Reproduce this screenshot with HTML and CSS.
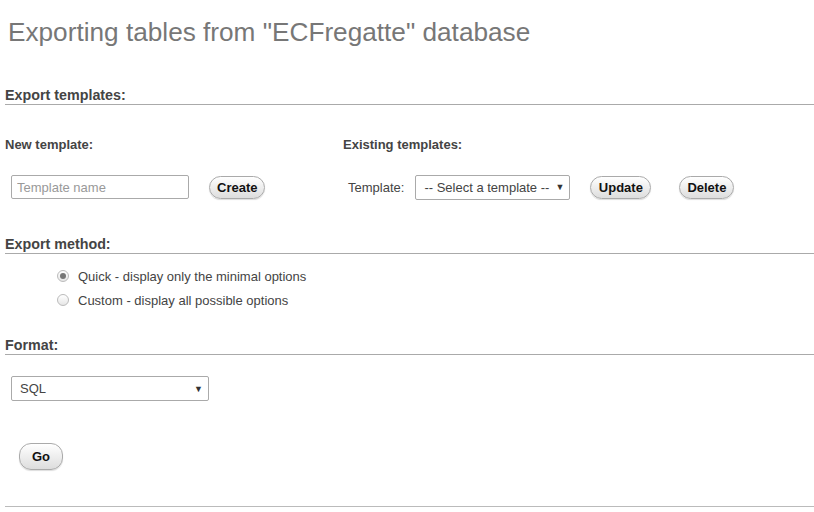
FILE: index.html
```html
<!DOCTYPE html>
<html>
<head>
<meta charset="utf-8">
<link rel="stylesheet" href="styles.css">
</head>
<body>
<div class="page">
  <h2 class="title">Exporting tables from "ECFregatte" database</h2>

  <section class="section templates">
    <h3 class="heading">Export templates:</h3>
    <div class="tpl-row">
      <div class="tpl-col tpl-new">
        <h4 class="subhead">New template:</h4>
        <div class="controls">
          <input class="text-input" type="text" placeholder="Template name">
          <button class="btn btn-create">Create</button>
        </div>
      </div>
      <div class="tpl-col tpl-existing">
        <h4 class="subhead">Existing templates:</h4>
        <div class="controls">
          <span class="label">Template:</span>
          <div class="select select-tpl"><span>-- Select a template --</span><span class="arrow">▼</span></div>
          <button class="btn btn-update">Update</button>
          <button class="btn btn-delete">Delete</button>
        </div>
      </div>
    </div>
  </section>

  <section class="section method">
    <h3 class="heading">Export method:</h3>
    <ul class="radios">
      <li class="radio-item"><span class="radio checked"></span><span>Quick - display only the minimal options</span></li>
      <li class="radio-item"><span class="radio"></span><span>Custom - display all possible options</span></li>
    </ul>
  </section>

  <section class="section format">
    <h3 class="heading">Format:</h3>
    <div class="select select-format"><span>SQL</span><span class="arrow">▼</span></div>
  </section>

  <div class="go-wrap">
    <button class="btn btn-go">Go</button>
  </div>
  <div class="bottom-rule"></div>
</div>
</body>
</html>
```

FILE: styles.css
```css
* { box-sizing: border-box; }
html, body { margin: 0; padding: 0; background: #fff; }
body {
  font-family: "Liberation Sans", Arial, sans-serif;
  font-size: 13px;
  color: #444;
}
.page { padding: 0 0 0 5px; }
.title {
  margin: 0;
  padding: 15px 0 0 3px;
  height: 80px;
  font-size: 26.2px;
  font-weight: normal;
  color: #777;
  line-height: 34px;
}
.heading {
  margin: 0;
  font-size: 14.3px;
  font-weight: bold;
  color: #444;
  line-height: 17px;
  padding-top: 7px;
  border-bottom: 1px solid #aaa;
}
.tpl-row { display: flex; }
.tpl-col { display: flex; flex-direction: column; }
.tpl-new { width: 338px; }
.subhead {
  margin: 0;
  font-size: 13px;
  font-weight: bold;
  color: #444;
  line-height: 16px;
  padding-top: 32px;
}
.controls {
  display: flex;
  align-items: center;
  margin-top: 21px;
  height: 26px;
}
.tpl-new .controls { padding-left: 6px; }
.text-input {
  width: 178px;
  height: 24px;
  border: 1px solid #aaa;
  border-radius: 2px;
  padding: 0 5px;
  font-family: "Liberation Sans", Arial, sans-serif;
  font-size: 13px;
  color: #444;
  background: #fff;
}
.text-input::placeholder { color: #999; }
.btn {
  font-family: "Liberation Sans", Arial, sans-serif;
  font-weight: bold;
  font-size: 13px;
  color: #111;
  height: 23px;
  padding: 0 7px;
  border: 1px solid #aaa;
  border-radius: 12px;
  background: linear-gradient(#fff, #ddd);
  box-shadow: 0 1px 1px #ddd;
}
.btn-create { margin-left: 20px; width: 56px; }
.label { color: #444; margin-left: 5px; font-size: 13px; }
.select {
  display: flex;
  align-items: center;
  justify-content: space-between;
  height: 25px;
  border: 1px solid #aaa;
  border-radius: 2px;
  background: #fff;
  color: #444;
  font-size: 13px;
  padding: 0 5px 0 8px;
}
.arrow { font-size: 9px; color: #333; }
.select-tpl { width: 155px; margin-left: 11px; }
.btn-update { margin-left: 20px; width: 61px; }
.btn-delete { margin-left: 28px; width: 55px; }
.templates { padding-bottom: 30px; }
.method .heading { padding-top: 6px; }
.radios { list-style: none; margin: 0; padding: 10px 0 0 52px; }
.radio-item { display: flex; align-items: center; height: 24px; color: #444; }
.radio {
  width: 12px; height: 12px;
  border: 1px solid #bbb;
  border-radius: 50%;
  background: linear-gradient(#fff, #e6e6e6);
  margin-right: 9px;
  position: relative;
}
.radio.checked::after {
  content: "";
  position: absolute;
  left: 2px; top: 2px;
  width: 6px; height: 6px;
  border-radius: 50%;
  background: #777;
}
.format { padding-top: 18px; }
.select-format { width: 198px; margin: 21px 0 0 6px; }
.go-wrap { padding: 42px 0 0 14px; height: 105px; }
.btn-go { width: 44px; height: 27px; border-radius: 12px; }
.bottom-rule { border-top: 1px solid #bbb; }
```
